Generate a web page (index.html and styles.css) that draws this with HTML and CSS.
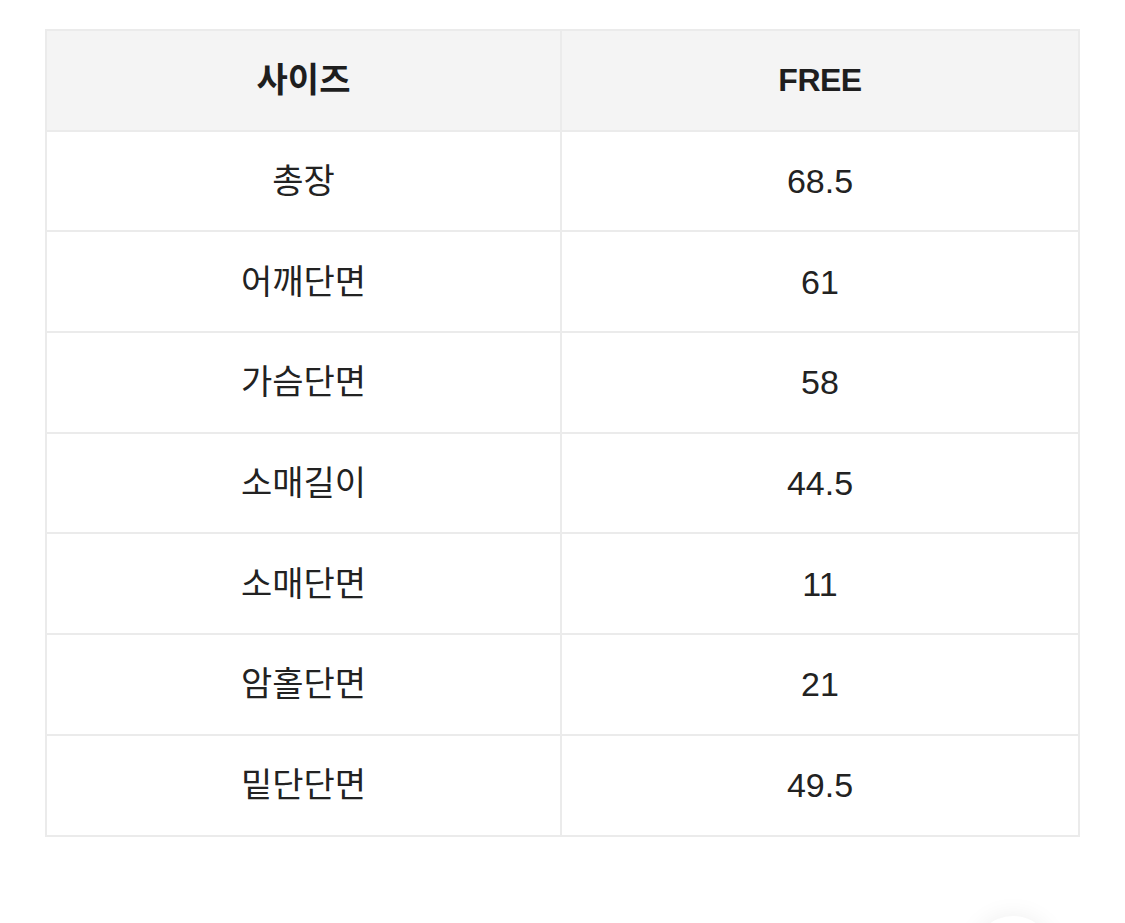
FILE: index.html
```html
<!DOCTYPE html>
<html lang="ko">
<head>
<meta charset="utf-8">
<title>사이즈</title>
<link rel="stylesheet" href="styles.css">
</head>
<body>
<div class="wrap">
<table class="size-table">
  <thead>
    <tr><th>사이즈</th><th>FREE</th></tr>
  </thead>
  <tbody>
    <tr><td>총장</td><td>68.5</td></tr>
    <tr><td>어깨단면</td><td>61</td></tr>
    <tr><td>가슴단면</td><td>58</td></tr>
    <tr><td>소매길이</td><td>44.5</td></tr>
    <tr><td>소매단면</td><td>11</td></tr>
    <tr><td>암홀단면</td><td>21</td></tr>
    <tr><td>밑단단면</td><td>49.5</td></tr>
  </tbody>
</table>
</div>
<div class="fab"></div>
</body>
</html>
```
FILE: styles.css
```css
html, body {
  margin: 0;
  padding: 0;
  background: #ffffff;
  overflow: hidden;
}
body {
  width: 1125px;
  height: 923px;
  position: relative;
  font-family: "Liberation Sans", "Noto Sans CJK KR", sans-serif;
  color: #222222;
}
.wrap {
  padding: 29px 0 0 45px;
}
.size-table {
  width: 1035px;
  border-collapse: collapse;
  table-layout: fixed;
  border: 2px solid #ebebeb;
}
.size-table th,
.size-table td {
  border: 2px solid #ebebeb;
  height: 98.7px;
  padding: 0;
  text-align: center;
  vertical-align: middle;
  font-size: 34px;
  line-height: 1;
}
.size-table th {
  background: #f4f4f4;
  font-weight: 700;
  color: #1e1e1e;
}
.size-table th:last-child {
  font-size: 32px;
  letter-spacing: -0.5px;
}
.size-table th:first-child,
.size-table td:first-child {
  width: 513px;
}
.size-table td {
  font-weight: 400;
}
.fab {
  position: absolute;
  left: 973px;
  top: 916px;
  width: 80px;
  height: 80px;
  border-radius: 50%;
  background: #ffffff;
  box-shadow: 0 0 24px rgba(0, 0, 0, 0.07);
}
```
